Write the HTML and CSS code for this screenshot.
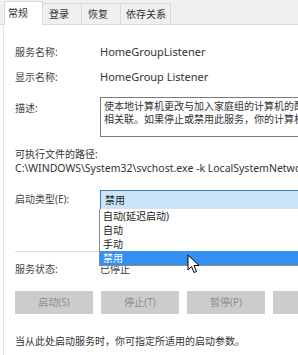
FILE: index.html
```html
<!DOCTYPE html>
<html lang="zh">
<head>
    <meta charset="UTF-8">
    <title>HomeGroup Listener 属性</title>
    <link rel="stylesheet" href="styles.css">
</head>
<body>
    <div class="tabs">
        <div class="tab active">常规</div>
        <div class="tab">登录</div>
        <div class="tab">恢复</div>
        <div class="tab last">依存关系</div>
    </div>
    <div class="panel">
        <div class="row first">
            <span class="label">服务名称:</span>
            <span class="value">HomeGroupListener</span>
        </div>
        <div class="row">
            <span class="label">显示名称:</span>
            <span class="value">HomeGroup Listener</span>
        </div>
        <div class="row desc-row">
            <span class="label desc-label">描述:</span>
            <div class="desc-box">使本地计算机更改与加入家庭组的计算机的配置和维护<br>相关联。如果停止或禁用此服务，你的计算机将无法</div>
        </div>
        <div class="path-label">可执行文件的路径:</div>
        <div class="path">C:\WINDOWS\System32\svchost.exe -k LocalSystemNetworkRestricted</div>
        <div class="row combo-row">
            <span class="label">启动类型(E):</span>
            <div class="combo">禁用</div>
        </div>
        <div class="sep"></div>
        <div class="row status-row">
            <span class="label">服务状态:</span>
            <span class="value status">已停止</span>
        </div>
        <div class="buttons">
            <div class="btn">启动(S)</div>
            <div class="btn">停止(T)</div>
            <div class="btn">暂停(P)</div>
            <div class="btn"></div>
        </div>
        <div class="hint">当从此处启动服务时，你可指定所适用的启动参数。</div>

        <!-- 下拉列表 -->
        <div class="dropdown">
            <div class="item">自动(延迟启动)</div>
            <div class="item">自动</div>
            <div class="item">手动</div>
            <div class="item selected">禁用</div>
        </div>
        <svg class="cursor" width="13" height="21" viewBox="0 0 13 21">
            <path d="M1 1 L1 16 L4.5 12.5 L7 18.5 L9.5 17.5 L7 11.5 L12 11.5 Z" fill="#fff" stroke="#000" stroke-width="1" stroke-linejoin="round"/>
        </svg>
    </div>
</body>
</html>
```

FILE: styles.css
```css
html, body {
    margin: 0;
    padding: 0;
    background: #fff;
}
body {
    width: 298px;
    height: 355px;
    overflow: hidden;
    font-family: "Noto Sans", "Noto Sans CJK SC", sans-serif;
    font-size: 10px;
    color: #333;
}
.tabs {
    display: flex;
    height: 24px;
    background: #f0f0f0;
    border-bottom: 1px solid #d9d9d9;
    padding-left: 4px;
    align-items: flex-end;
}
.tab {
    height: 20px;
    line-height: 20px;
    padding: 0 12px 0 6px;
    border: 1px solid #d9d9d9;
    border-bottom: none;
    border-left: none;
    color: #333;
}
.tab.active {
    height: 23px;
    line-height: 22px;
    background: #fff;
    border-left: 1px solid #d9d9d9;
    margin-bottom: -1px;
    padding: 0 14px 0 3px;
}
.tab.last {
    padding: 0 4px 0 5px;
}
.panel {
    position: relative;
    margin-left: 3px;
    border-left: 1px solid #e3e3e3;
    padding-left: 11px;
    height: 330px;
}
.row {
    display: grid;
    grid-template-columns: 85px 1fr;
    line-height: 16px;
}
.row.first {
    padding-top: 19px;
}
.row + .row {
    margin-top: 9px;
}
.label {
    color: #444;
}
.value {
    font-size: 11px;
    color: #333;
}
.value.status {
    font-size: 10px;
}
.row.desc-row {
    margin-top: 12px;
}
.desc-label {
    padding-top: 3px;
}
.desc-box {
    height: 36px;
    border: 1px solid #7a7a7a;
    border-right: none;
    padding: 2px 0 0 3px;
    line-height: 13px;
    white-space: nowrap;
    overflow: hidden;
    width: 200px;
    color: #333;
}
.path-label {
    margin-top: 10px;
    line-height: 14px;
}
.path {
    font-size: 10.5px;
    line-height: 14px;
    white-space: nowrap;
    color: #333;
}
.row.combo-row {
    margin-top: 15px;
    line-height: 19px;
}
.combo {
    height: 19px;
    background: #cce4f7;
    border: 1px solid #3c7fb1;
    border-right: none;
    padding-left: 4px;
    color: #222;
}
.sep {
    margin-top: 40px;
    height: 1px;
    background: #dcdcdc;
}
.row.status-row {
    margin-top: 9px;
}
.buttons {
    display: flex;
    gap: 8px;
    margin-top: 14px;
}
.btn {
    flex: none;
    width: 78px;
    height: 23px;
    line-height: 23px;
    background: #cccccc;
    color: #8c8c8c;
    text-align: center;
}
.hint {
    margin-top: 19px;
    line-height: 16px;
    color: #333;
}
.dropdown {
    position: absolute;
    left: 95px;
    top: 184px;
    width: 200px;
    background: #fff;
    border: 1px solid #8a8a8a;
    border-right: none;
    border-top: none;
}
.item {
    height: 14px;
    line-height: 14px;
    padding-left: 3px;
    color: #222;
}
.item.selected {
    background: #3390f0;
    color: #fff;
}
.cursor {
    position: absolute;
    left: 183px;
    top: 229px;
}
```
